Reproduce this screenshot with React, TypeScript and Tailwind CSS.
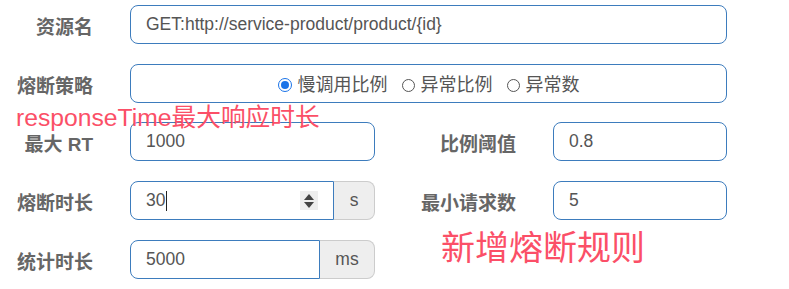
import React from "react";

const font = { fontFamily: '"Liberation Sans", "Noto Sans CJK SC", sans-serif' };

function Label({ children, w = "w-[93px]" }: { children: React.ReactNode; w?: string }) {
  return (
    <div
      className={`${w} h-[39px] shrink-0 flex items-center justify-end pt-[5px] text-[19px] font-bold text-[#666] leading-none`}
    >
      {children}
    </div>
  );
}

function Input({ value, w }: { value: string; w: string }) {
  return (
    <div
      className={`${w} h-[39px] shrink-0 rounded-[8px] border border-[#3d7cbd] bg-white pl-[15px] flex items-center text-[17.5px] text-[#555]`}
    >
      {value}
    </div>
  );
}

function Radio({ checked, label }: { checked?: boolean; label: string }) {
  return (
    <div className="flex items-center gap-[6px]">
      {checked ? (
        <span className="flex h-[14px] w-[14px] items-center justify-center rounded-full border-[1.5px] border-[#1a73e8]">
          <span className="h-[8px] w-[8px] rounded-full bg-[#1a73e8]" />
        </span>
      ) : (
        <span className="h-[13px] w-[13px] rounded-full border border-[#555]" />
      )}
      <span>{label}</span>
    </div>
  );
}

export default function App() {
  return (
    <div className="relative h-[289px] w-[789px] overflow-hidden bg-white" style={font}>
      <div className="flex flex-col pt-[5px]">
        {/* Row 1 */}
        <div className="flex items-start">
          <Label>资源名</Label>
          <div className="ml-[37px]">
            <Input value="GET:http://service-product/product/{id}" w="w-[597px]" />
          </div>
        </div>
        {/* Row 2 */}
        <div className="mt-[20px] flex items-start">
          <Label>熔断策略</Label>
          <div className="ml-[37px] flex h-[39px] w-[597px] items-center justify-center gap-[14px] rounded-[8px] border border-[#3d7cbd] pt-[3px] text-[18px] text-[#555]">
            <Radio checked label="慢调用比例" />
            <Radio label="异常比例" />
            <Radio label="异常数" />
          </div>
        </div>
        {/* Row 3 */}
        <div className="mt-[19px] flex items-start">
          <Label>最大 RT</Label>
          <div className="ml-[37px]">
            <Input value="1000" w="w-[245px]" />
          </div>
          <Label w="w-[141px]">比例阈值</Label>
          <div className="ml-[37px]">
            <Input value="0.8" w="w-[174px]" />
          </div>
        </div>
        {/* Row 4 */}
        <div className="mt-[20px] flex items-start">
          <Label>熔断时长</Label>
          <div className="ml-[37px] flex h-[39px] w-[245px]">
            <div className="flex h-[39px] w-[204px] items-center rounded-l-[8px] border border-[#3d7cbd] pl-[15px] pr-[15px] text-[17.5px] text-[#555]">
              <span>30</span>
              <span className="ml-[1px] inline-block h-[20px] w-[1px] bg-[#222]" />
              <span className="ml-auto flex h-[19px] w-[18px] flex-col items-center justify-center gap-[2px] bg-[#eeeeee]">
                <svg width="10" height="6" viewBox="0 0 10 6"><path d="M5 0 L10 6 L0 6 Z" fill="#444" /></svg>
                <svg width="10" height="6" viewBox="0 0 10 6"><path d="M0 0 L10 0 L5 6 Z" fill="#444" /></svg>
              </span>
            </div>
            <div className="flex h-[39px] flex-1 items-center justify-center rounded-r-[8px] border border-l-0 border-[#ccc] bg-[#eee] text-[17.5px] text-[#555]">
              s
            </div>
          </div>
          <Label w="w-[141px]">最小请求数</Label>
          <div className="ml-[37px]">
            <Input value="5" w="w-[174px]" />
          </div>
        </div>
        {/* Row 5 */}
        <div className="mt-[20px] flex items-start">
          <Label>统计时长</Label>
          <div className="ml-[37px] flex h-[39px] w-[245px]">
            <div className="flex h-[39px] w-[190px] items-center rounded-l-[8px] border border-[#3d7cbd] pl-[15px] text-[17.5px] text-[#555]">
              5000
            </div>
            <div className="flex h-[39px] flex-1 items-center justify-center rounded-r-[8px] border border-l-0 border-[#ccc] bg-[#eee] text-[17.5px] text-[#555]">
              ms
            </div>
          </div>
        </div>
      </div>

      {/* annotations */}
      <div className="absolute left-[16px] top-[102px] text-[24.7px] leading-[32px] text-[#fb4f67]">
        responseTime最大响应时长
      </div>
      <div className="absolute left-[441px] top-[226px] text-[34px] leading-[44px] text-[#fb4f67]">
        新增熔断规则
      </div>
    </div>
  );
}
